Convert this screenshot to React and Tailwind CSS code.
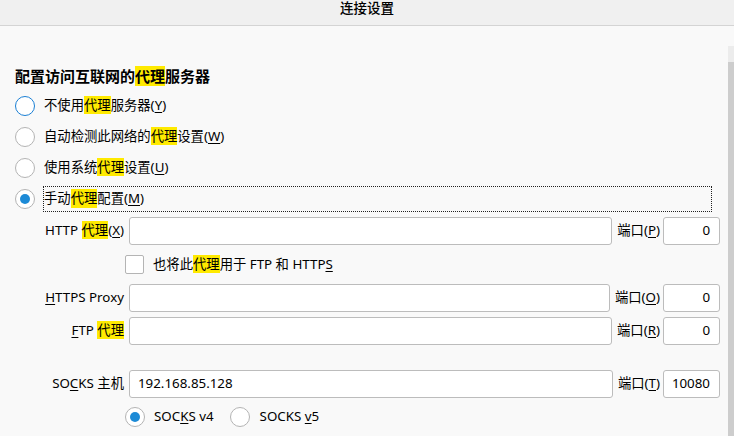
import React from 'react';

const font = {fontFamily: '"Noto Sans", "Noto Sans CJK SC", sans-serif'};

function Hl({children}) {
    return <span className="bg-[#ffea00]">{children}</span>;
}

function U({children}) {
    return <span className="underline underline-offset-2 decoration-1">{children}</span>;
}

function Radio({checked = false, focused = false}) {
    return (
        <span
            className={
                'flex items-center justify-center w-[20px] h-[20px] rounded-full bg-white border shrink-0 ' +
                (focused ? 'border-[#1a7fd4]' : 'border-[#b4b4b4]')
            }
        >
            {checked && <span className="w-[10px] h-[10px] rounded-full bg-[#1c8ad6]" />}
        </span>
    );
}

function TextBox({value = '', align = 'left', className = ''}) {
    return (
        <div
            className={
                'h-[28px] bg-white border border-[#bcbcbc] rounded-[3px] flex items-center ' +
                (align === 'right' ? 'justify-end pr-[9px] ' : 'pl-[8px] ') +
                className
            }
        >
            {value}
        </div>
    );
}

function ProxyRow({label, portLabel, port = '0', host = '', className = ''}) {
    return (
        <div className={'flex items-center pr-[8px] ' + className}>
            <div className="w-[124px] text-right shrink-0">{label}</div>
            <TextBox value={host} className="flex-1 ml-[5px]" />
            <div className="ml-[5px] mr-[3px] whitespace-nowrap">{portLabel}</div>
            <TextBox value={port} align="right" className="w-[57px] shrink-0" />
        </div>
    );
}

export default function App() {
    const options = [
        {label: <>不使用<Hl>代理</Hl>服务器(<U>Y</U>)</>, focused: true},
        {label: <>自动检测此网络的<Hl>代理</Hl>设置(<U>W</U>)</>},
        {label: <>使用系统<Hl>代理</Hl>设置(<U>U</U>)</>},
    ];

    return (
        <div className="w-[734px] h-[436px] overflow-hidden bg-[#f9f9f9] text-[13.33px] text-[#000] flex flex-col" style={font}>
            <div className="h-[26px] shrink-0 bg-[#f0f0f0] border-b border-[#d4d4d4] flex justify-center">
                <div className="pt-px font-medium text-[13.5px] leading-[15px]">连接设置</div>
            </div>

            <div className="flex flex-1 min-h-0">
                <div className="flex-1 min-w-0">
                    <div className="pt-[40px] pl-[15px] h-[64px] text-[15px] font-bold leading-[20px]">
                        配置访问互联网的<Hl>代理</Hl>服务器
                    </div>

                    {options.map((o, i) => (
                        <div key={i} className="h-[31px] pl-[15px] flex items-center">
                            <Radio focused={o.focused} />
                            <span className="ml-[9px]">{o.label}</span>
                        </div>
                    ))}

                    <div className="h-[31px] pl-[15px] pr-[16px] flex items-center">
                        <Radio checked />
                        <div className="ml-[8px] flex-1 h-[26px] border border-dotted border-[#222] flex items-center">
                            手动<Hl>代理</Hl>配置(<U>M</U>)
                        </div>
                    </div>

                    <ProxyRow
                        className="mt-[3px]"
                        label={<>HTTP <Hl>代理</Hl>(<U>X</U>)</>}
                        portLabel={<>端口(<U>P</U>)</>}
                    />

                    <div className="h-[39px] pl-[125px] flex items-center">
                        <span className="w-[19px] h-[19px] bg-white border border-[#b4b4b4] rounded-[2px] shrink-0" />
                        <span className="ml-[9px]">也将此<Hl>代理</Hl>用于 FTP 和 HTTP<U>S</U></span>
                    </div>

                    <ProxyRow
                        label={<><U>H</U>TTPS Proxy</>}
                        portLabel={<>端口(<U>O</U>)</>}
                    />

                    <ProxyRow
                        className="mt-[5px]"
                        label={<><U>F</U>TP <Hl>代理</Hl></>}
                        portLabel={<>端口(<U>R</U>)</>}
                    />

                    <ProxyRow
                        className="mt-[25px]"
                        label={<>SO<U>C</U>KS 主机</>}
                        host="192.168.85.128"
                        portLabel={<>端口(<U>T</U>)</>}
                        port="10080"
                    />

                    <div className="h-[38px] pl-[125px] flex items-center">
                        <Radio checked />
                        <span className="ml-[9px]">SOC<U>K</U>S v4</span>
                        <span className="ml-[16px]"><Radio /></span>
                        <span className="ml-[10px]">SOCKS <U>v</U>5</span>
                    </div>
                </div>

                <div className="w-[6px] shrink-0 pt-[20px] flex flex-col">
                    <div className="h-[16px] bg-[#ececec]" />
                    <div className="flex-1 bg-[#cdcdcd]" />
                </div>
            </div>
        </div>
    );
}
